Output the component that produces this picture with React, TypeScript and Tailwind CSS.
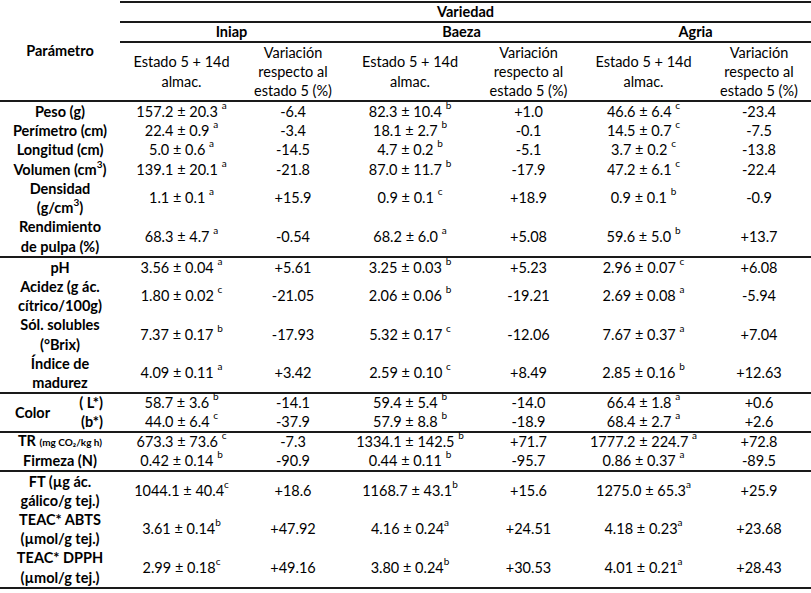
import React from "react";

const COLS = "grid grid-cols-[120px_123px_100px_134px_103px_127px_104px]";
const LINE = "border-[#1a1a1a]";

type V = [string, string, boolean?];

const Sup = ({ c, sp = true }: { c: string; sp?: boolean }) => (
  <>
    {sp ? "\u00a0" : ""}
    <sup className="text-[10px] top-[-8px]">{c}</sup>
  </>
);

const Val = ({ v }: { v: V }) => (
  <div className="flex items-center justify-center text-center whitespace-nowrap">
    <span>
      {v[0]}
      <Sup c={v[1]} sp={v[2] !== false} />
    </span>
  </div>
);

const Num = ({ t }: { t: string }) => (
  <div className="flex items-center justify-center text-center whitespace-nowrap">{t}</div>
);

const Label = ({ children }: { children: React.ReactNode }) => (
  <div className="flex items-center justify-center text-center font-bold whitespace-nowrap">
    <span>{children}</span>
  </div>
);

type Row = { label: React.ReactNode; c: [V, string, V, string, V, string] };

const RowCells = ({ r }: { r: Row }) => (
  <>
    <Label>{r.label}</Label>
    <Val v={r.c[0]} />
    <Num t={r.c[1]} />
    <Val v={r.c[2]} />
    <Num t={r.c[3]} />
    <Val v={r.c[4]} />
    <Num t={r.c[5]} />
  </>
);

const cm3 = <sup className="text-[10px] top-[-7px]">3</sup>;

const sec1: Row[] = [
  { label: "Peso (g)", c: [["157.2 ± 20.3", "a"], "-6.4", ["82.3 ± 10.4", "b"], "+1.0", ["46.6 ± 6.4", "c"], "-23.4"] },
  { label: "Perímetro (cm)", c: [["22.4 ± 0.9", "a"], "-3.4", ["18.1 ± 2.7", "b"], "-0.1", ["14.5 ± 0.7", "c"], "-7.5"] },
  { label: "Longitud (cm)", c: [["5.0 ± 0.6", "a"], "-14.5", ["4.7 ± 0.2", "b"], "-5.1", ["3.7 ± 0.2", "c"], "-13.8"] },
  { label: <>Volumen (cm{cm3})</>, c: [["139.1 ± 20.1", "a"], "-21.8", ["87.0 ± 11.7", "b"], "-17.9", ["47.2 ± 6.1", "c"], "-22.4"] },
  { label: <>Densidad<br />(g/cm{cm3})</>, c: [["1.1 ± 0.1", "a"], "+15.9", ["0.9 ± 0.1", "c"], "+18.9", ["0.9 ± 0.1", "b"], "-0.9"] },
  { label: <>Rendimiento<br />de pulpa (%)</>, c: [["68.3 ± 4.7", "a"], "-0.54", ["68.2 ± 6.0", "a"], "+5.08", ["59.6 ± 5.0", "b"], "+13.7"] },
];

const sec2: Row[] = [
  { label: "pH", c: [["3.56 ± 0.04", "a"], "+5.61", ["3.25 ± 0.03", "b"], "+5.23", ["2.96 ± 0.07", "c"], "+6.08"] },
  { label: <>Acidez (g ác.<br />cítrico/100g)</>, c: [["1.80 ± 0.02", "c"], "-21.05", ["2.06 ± 0.06", "b"], "-19.21", ["2.69 ± 0.08", "a"], "-5.94"] },
  { label: <>Sól. solubles<br />(°Brix)</>, c: [["7.37 ± 0.17", "b"], "-17.93", ["5.32 ± 0.17", "c"], "-12.06", ["7.67 ± 0.37", "a"], "+7.04"] },
  { label: <>Índice de<br />madurez</>, c: [["4.09 ± 0.11", "a"], "+3.42", ["2.59 ± 0.10", "c"], "+8.49", ["2.85 ± 0.16", "b"], "+12.63"] },
];

const colorRows: [V, string, V, string, V, string][] = [
  [["58.7 ± 3.6", "b"], "-14.1", ["59.4 ± 5.4", "b"], "-14.0", ["66.4 ± 1.8", "a"], "+0.6"],
  [["44.0 ± 6.4", "c"], "-37.9", ["57.9 ± 8.8", "b"], "-18.9", ["68.4 ± 2.7", "a"], "+2.6"],
];

const sec4: Row[] = [
  {
    label: (
      <>
        TR <span className="text-[10px]">(mg CO₂/kg h)</span>
      </>
    ),
    c: [["673.3 ± 73.6", "c"], "-7.3", ["1334.1 ± 142.5", "b"], "+71.7", ["1777.2 ± 224.7", "a"], "+72.8"],
  },
  { label: "Firmeza (N)", c: [["0.42 ± 0.14", "b"], "-90.9", ["0.44 ± 0.11", "b"], "-95.7", ["0.86 ± 0.37", "a"], "-89.5"] },
];

const sec5: Row[] = [
  { label: <>FT (µg ác.<br />gálico/g tej.)</>, c: [["1044.1 ± 40.4", "c", false], "+18.6", ["1168.7 ± 43.1", "b", false], "+15.6", ["1275.0 ± 65.3", "a", false], "+25.9"] },
  { label: <>TEAC* ABTS<br />(µmol/g tej.)</>, c: [["3.61 ± 0.14", "b", false], "+47.92", ["4.16 ± 0.24", "a", false], "+24.51", ["4.18 ± 0.23", "a", false], "+23.68"] },
  { label: <>TEAC* DPPH<br />(µmol/g tej.)</>, c: [["2.99 ± 0.18", "c", false], "+49.16", ["3.80 ± 0.24", "b", false], "+30.53", ["4.01 ± 0.21", "a", false], "+28.43"] },
];

export default function App() {
  return (
    <div
      className="w-[811px] h-[593px] bg-white text-black pt-[1px] text-[14.5px] leading-[19.2px] overflow-hidden"
      style={{ fontFamily: "Lato, 'Open Sans', sans-serif" }}
    >
      {/* Header */}
      <div className={`${COLS} grid-rows-[22px_20px_57px] border-b-2 ${LINE}`}>
        <div className="row-span-3 flex items-center justify-center font-bold">Parámetro</div>
        <div className={`col-span-6 border-t-2 border-b-2 ${LINE} flex items-center justify-center font-bold`}>
          Variedad
        </div>
        <div className={`col-span-2 border-b-2 ${LINE} flex items-center justify-center font-bold`}>Iniap</div>
        <div className={`col-span-2 border-b-2 ${LINE} flex items-center justify-center font-bold`}>Baeza</div>
        <div className={`col-span-2 border-b-2 ${LINE} flex items-center justify-center font-bold`}>Agria</div>
        {[0, 1, 2].map((i) => (
          <React.Fragment key={i}>
            <div className="flex items-center justify-center text-center">
              <span>
                Estado 5 + 14d
                <br />
                almac.
              </span>
            </div>
            <div className="flex items-center justify-center text-center">
              <span>
                Variación
                <br />
                respecto al
                <br />
                estado 5 (%)
              </span>
            </div>
          </React.Fragment>
        ))}
      </div>

      {/* Section 1 */}
      <div className={`${COLS} grid-rows-[19px_19px_20px_19px_38px_39px] border-b-2 ${LINE}`}>
        {sec1.map((r, i) => (
          <RowCells key={i} r={r} />
        ))}
      </div>

      {/* Section 2 */}
      <div className={`${COLS} grid-rows-[19px_38px_39px_38px] border-b-2 ${LINE}`}>
        {sec2.map((r, i) => (
          <RowCells key={i} r={r} />
        ))}
      </div>

      {/* Color */}
      <div className={`${COLS} grid-rows-[18px_19px] border-b-2 ${LINE}`}>
        <div className="row-span-2 flex items-center font-bold pl-[15px] pr-[17px]">
          <span className="flex-1">Color</span>
          <div className="flex flex-col items-end leading-[18.5px]">
            <span>( L*)</span>
            <span>(b*)</span>
          </div>
        </div>
        <Val v={colorRows[0][0]} />
        <Num t={colorRows[0][1]} />
        <Val v={colorRows[0][2]} />
        <Num t={colorRows[0][3]} />
        <Val v={colorRows[0][4]} />
        <Num t={colorRows[0][5]} />
        <Val v={colorRows[1][0]} />
        <Num t={colorRows[1][1]} />
        <Val v={colorRows[1][2]} />
        <Num t={colorRows[1][3]} />
        <Val v={colorRows[1][4]} />
        <Num t={colorRows[1][5]} />
      </div>

      {/* Section 4 */}
      <div className={`${COLS} grid-rows-[18px_19px] border-b-2 ${LINE}`}>
        {sec4.map((r, i) => (
          <RowCells key={i} r={r} />
        ))}
      </div>

      {/* Section 5 */}
      <div className={`${COLS} grid-rows-[38px_38px_39px] border-b-2 ${LINE}`}>
        {sec5.map((r, i) => (
          <RowCells key={i} r={r} />
        ))}
      </div>
    </div>
  );
}
